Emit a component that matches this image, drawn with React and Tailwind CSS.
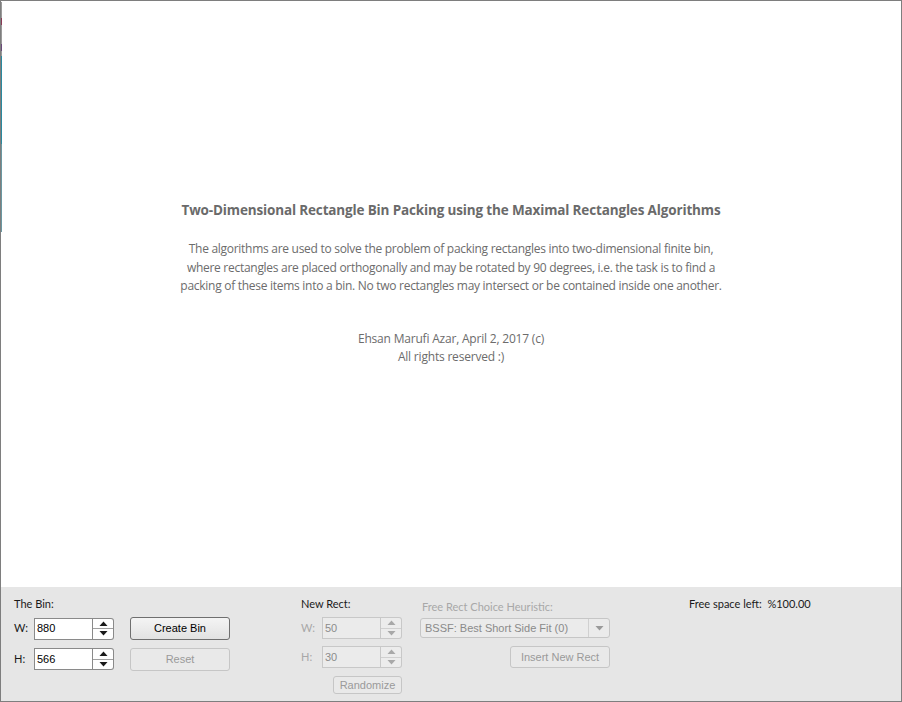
import React from "react";

const ui = { fontFamily: '"Liberation Sans", Arial, sans-serif' };
const seg = { fontFamily: '"Open Sans", "Noto Sans", sans-serif' };
const lab = { fontFamily: 'Lato, "Open Sans", sans-serif' };

function Tri({ up, color }) {
  return (
    <svg width="9" height="5" viewBox="0 0 9 5">
      {up ? (
        <polygon points="0.5,5 8.5,5 4.5,0.5" fill={color} />
      ) : (
        <polygon points="0.5,0 8.5,0 4.5,4.5" fill={color} />
      )}
    </svg>
  );
}

function Spin({ value, disabled }) {
  const c = disabled ? "#a8a8a8" : "#1a1a1a";
  return (
    <div className="flex h-[22px]">
      <div
        className={
          "w-[59px] h-full border flex items-center pl-[2px] text-[11px] " +
          (disabled
            ? "bg-[#ebebeb] border-[#c8c8c8] text-[#8c8c8c]"
            : "bg-white border-[#8a8a8a] text-black")
        }
        style={ui}
      >
        {value}
      </div>
      <div
        className={
          "w-[21px] h-full border border-l-0 rounded-r-[3px] flex flex-col " +
          (disabled ? "border-[#c8c8c8] bg-[#ececec]" : "border-[#8a8a8a] bg-white")
        }
      >
        <div
          className={
            "flex-1 flex items-center justify-center border-b " +
            (disabled ? "border-[#d0d0d0]" : "border-[#a0a0a0]")
          }
        >
          <Tri up color={c} />
        </div>
        <div className="flex-1 flex items-center justify-center">
          <Tri color={c} />
        </div>
      </div>
    </div>
  );
}

function Btn({ children, disabled, w, h = "h-[23px]" }) {
  return (
    <div
      className={
        w +
        " " +
        h +
        " rounded-[3px] border flex items-center justify-center text-[11px] " +
        (disabled
          ? "border-[#c6c6c6] bg-[#e9e9e9] text-[#9a9a9a]"
          : "border-[#6f6f6f] bg-gradient-to-b from-[#f4f4f4] to-[#e2e2e2] text-black")
      }
      style={ui}
    >
      {children}
    </div>
  );
}

export default function App() {
  return (
    <div className="w-[902px] h-[702px] border border-[#7e7e7e] bg-white flex flex-col relative overflow-hidden">
      <div className="absolute left-0 top-[1px] w-[1px] h-[230px] flex flex-col">
        <div className="h-[16px] bg-[#9a9a9a]" />
        <div className="h-[7px] bg-[#8a3a55]" />
        <div className="h-[19px] bg-[#9a9a9a]" />
        <div className="h-[7px] bg-[#6a4a7a]" />
        <div className="h-[5px] bg-[#9a9a9a]" />
        <div className="h-[88px] bg-[#2a8aa0]" />
        <div className="flex-1 bg-[#6a98a2]" />
      </div>

      <main className="flex-1 flex flex-col items-center text-center pt-[200px] text-[#6c6c6c]" style={seg}>
        <h1 className="text-[13.5px] leading-[19px] font-bold text-[#6a6a6a] tracking-[-0.15px] whitespace-nowrap">
          Two-Dimensional Rectangle Bin Packing using the Maximal Rectangles Algorithms
        </h1>
        <p className="mt-[20px] text-[12px] leading-[18.5px] tracking-[-0.28px] whitespace-nowrap">
          The algorithms are used to solve the problem of packing rectangles into two-dimensional finite bin,
          <br />
          where rectangles are placed orthogonally and may be rotated by 90 degrees, i.e. the task is to find a
          <br />
          packing of these items into a bin. No two rectangles may intersect or be contained inside one another.
        </p>
        <p className="mt-[34px] text-[12px] leading-[18px] tracking-[-0.2px]">
          Ehsan Marufi Azar, April 2, 2017 (c)
          <br />
          All rights reserved :)
        </p>
      </main>

      <footer className="h-[114px] bg-[#e6e6e6] flex pl-[13px] pt-[8px] text-[11px]" style={lab}>
        {/* The Bin */}
        <div className="w-[287px] flex flex-col">
          <div className="h-[18px] leading-[18px] text-[#1a1a1a]">The Bin:</div>
          <div className="flex items-center mt-[4px]">
            <span className="w-[20px] text-[#1a1a1a]">W:</span>
            <Spin value="880" />
            <div className="ml-[16px]">
              <Btn w="w-[100px]">Create Bin</Btn>
            </div>
          </div>
          <div className="flex items-center mt-[7px]">
            <span className="w-[20px] text-[#1a1a1a]">H:</span>
            <Spin value="566" />
            <div className="ml-[16px] mt-[1px]">
              <Btn w="w-[100px]" disabled>Reset</Btn>
            </div>
          </div>
        </div>

        {/* New Rect */}
        <div className="w-[119px] flex flex-col">
          <div className="h-[18px] leading-[18px] text-[#1a1a1a]">New Rect:</div>
          <div className="flex items-center mt-[4px]">
            <span className="w-[21px] text-[#a8a8a8]">W:</span>
            <Spin value="50" disabled />
          </div>
          <div className="flex items-center mt-[7px]">
            <span className="w-[21px] text-[#a8a8a8]">H:</span>
            <Spin value="30" disabled />
          </div>
          <div className="mt-[8px] ml-[32px]">
            <Btn w="w-[69px]" h="h-[18px]" disabled>
              Randomize
            </Btn>
          </div>
        </div>

        {/* Heuristic */}
        <div className="w-[269px] flex flex-col">
          <div className="h-[18px] leading-[18px] mt-[3px] pl-[2px] text-[#a8a8a8]">
            Free Rect Choice Heuristic:
          </div>
          <div className="w-[190px] h-[20px] mt-[2px] rounded-[3px] border border-[#c6c6c6] bg-[#ebebeb] flex text-[11px]">
            <div className="flex-1 flex items-center pl-[4px] text-[#8a8a8a]" style={ui}>
              BSSF: Best Short Side Fit (0)
            </div>
            <div className="w-[21px] border-l border-[#d0d0d0] flex items-center justify-center">
              <Tri color="#9a9a9a" />
            </div>
          </div>
          <div className="mt-[8px] ml-[90px]">
            <Btn w="w-[100px]" h="h-[22px]" disabled>
              Insert New Rect
            </Btn>
          </div>
        </div>

        {/* Free space */}
        <div className="flex-1">
          <div className="h-[18px] leading-[18px] text-[#1a1a1a]">
            Free space left:&nbsp;&nbsp;%100.00
          </div>
        </div>
      </footer>
    </div>
  );
}
